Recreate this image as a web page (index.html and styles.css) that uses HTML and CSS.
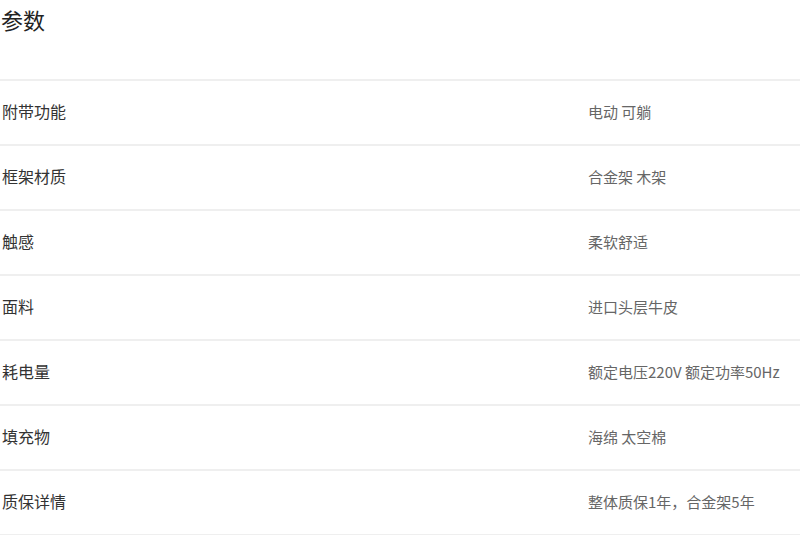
FILE: index.html
```html
<!DOCTYPE html>
<html lang="zh">
<head>
<meta charset="utf-8">
<link rel="stylesheet" href="styles.css">
</head>
<body>
<div class="params">
  <h2 class="title">参数</h2>
  <div class="row"><div class="label">附带功能</div><div class="value">电动 可躺</div></div>
  <div class="row"><div class="label">框架材质</div><div class="value">合金架 木架</div></div>
  <div class="row"><div class="label">触感</div><div class="value">柔软舒适</div></div>
  <div class="row"><div class="label">面料</div><div class="value">进口头层牛皮</div></div>
  <div class="row"><div class="label">耗电量</div><div class="value">额定电压220V 额定功率50Hz</div></div>
  <div class="row"><div class="label">填充物</div><div class="value">海绵 太空棉</div></div>
  <div class="row"><div class="label">质保详情</div><div class="value">整体质保1年，合金架5年</div></div>
</div>
</body>
</html>
```
FILE: styles.css
```css
html, body {
  margin: 0;
  padding: 0;
  background: #fff;
}
body {
  font-family: "Noto Sans CJK SC", "Microsoft YaHei", sans-serif;
}
.params {
  width: 800px;
}
.title {
  margin: 0;
  height: 81px;
  box-sizing: border-box;
  padding: 4px 0 0 1px;
  font-size: 22px;
  line-height: 30px;
  font-weight: normal;
  color: #222;
  border-bottom: 2px solid #efefef;
}
.row {
  display: flex;
  align-items: center;
  height: 65px;
  box-sizing: border-box;
  padding-bottom: 3px;
  border-bottom: 2px solid #efefef;
}
.label {
  width: 588px;
  padding-left: 2px;
  box-sizing: border-box;
  font-size: 16px;
  color: #333;
}
.value {
  font-size: 15px;
  color: #666;
}
```
